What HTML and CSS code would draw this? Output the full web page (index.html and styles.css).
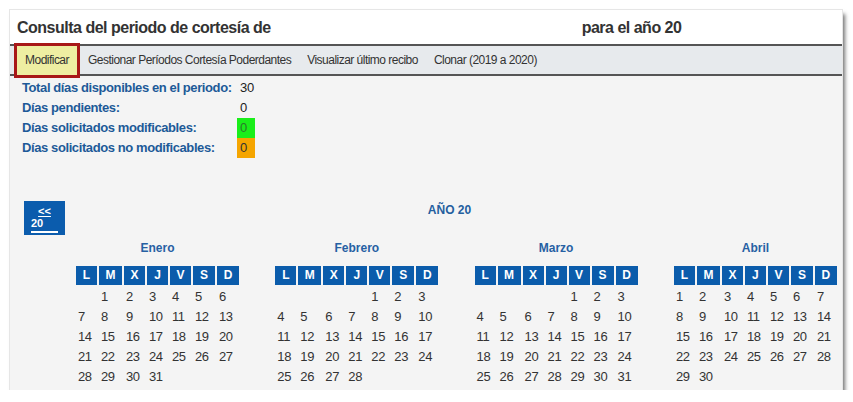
FILE: index.html
```html
<!DOCTYPE html>
<html lang="es">
<head>
<meta charset="utf-8">
<title>Consulta del periodo de cortesía</title>
<link rel="stylesheet" href="styles.css">
</head>
<body>
<div class="panel">
  <div class="header">
    <span class="title">Consulta del periodo de cortesía de</span>
    <span class="title title-right">para el año 20</span>
  </div>
  <div class="toolbar">
    <span class="tool active">Modificar</span>
    <span class="tool">Gestionar Períodos Cortesía Poderdantes</span>
    <span class="tool">Visualizar último recibo</span>
    <span class="tool">Clonar (2019 a 2020)</span>
  </div>
  <div class="stats">
    <span class="label">Total días disponibles en el periodo:</span><span class="value">30</span>
    <span class="label">Días pendientes:</span><span class="value">0</span>
    <span class="label">Días solicitados modificables:</span><span class="value green">0</span>
    <span class="label">Días solicitados no modificables:</span><span class="value orange">0</span>
  </div>
  <div class="nav">
    <div class="prev"><span class="prev-top">&lt;&lt;</span><span class="prev-year">20</span></div>
    <div class="year">AÑO 20</div>
  </div>
  <div class="months">
    <div class="month">
      <div class="month-name">Enero</div>
      <div class="week-head"><span>L</span><span>M</span><span>X</span><span>J</span><span>V</span><span>S</span><span>D</span></div>
      <div class="days">
        <span></span><span>1</span><span>2</span><span>3</span><span>4</span><span>5</span><span>6</span>
        <span>7</span><span>8</span><span>9</span><span>10</span><span>11</span><span>12</span><span>13</span>
        <span>14</span><span>15</span><span>16</span><span>17</span><span>18</span><span>19</span><span>20</span>
        <span>21</span><span>22</span><span>23</span><span>24</span><span>25</span><span>26</span><span>27</span>
        <span>28</span><span>29</span><span>30</span><span>31</span>
      </div>
    </div>
    <div class="month">
      <div class="month-name">Febrero</div>
      <div class="week-head"><span>L</span><span>M</span><span>X</span><span>J</span><span>V</span><span>S</span><span>D</span></div>
      <div class="days">
        <span></span><span></span><span></span><span></span><span>1</span><span>2</span><span>3</span>
        <span>4</span><span>5</span><span>6</span><span>7</span><span>8</span><span>9</span><span>10</span>
        <span>11</span><span>12</span><span>13</span><span>14</span><span>15</span><span>16</span><span>17</span>
        <span>18</span><span>19</span><span>20</span><span>21</span><span>22</span><span>23</span><span>24</span>
        <span>25</span><span>26</span><span>27</span><span>28</span>
      </div>
    </div>
    <div class="month">
      <div class="month-name">Marzo</div>
      <div class="week-head"><span>L</span><span>M</span><span>X</span><span>J</span><span>V</span><span>S</span><span>D</span></div>
      <div class="days">
        <span></span><span></span><span></span><span></span><span>1</span><span>2</span><span>3</span>
        <span>4</span><span>5</span><span>6</span><span>7</span><span>8</span><span>9</span><span>10</span>
        <span>11</span><span>12</span><span>13</span><span>14</span><span>15</span><span>16</span><span>17</span>
        <span>18</span><span>19</span><span>20</span><span>21</span><span>22</span><span>23</span><span>24</span>
        <span>25</span><span>26</span><span>27</span><span>28</span><span>29</span><span>30</span><span>31</span>
      </div>
    </div>
    <div class="month">
      <div class="month-name">Abril</div>
      <div class="week-head"><span>L</span><span>M</span><span>X</span><span>J</span><span>V</span><span>S</span><span>D</span></div>
      <div class="days">
        <span>1</span><span>2</span><span>3</span><span>4</span><span>5</span><span>6</span><span>7</span>
        <span>8</span><span>9</span><span>10</span><span>11</span><span>12</span><span>13</span><span>14</span>
        <span>15</span><span>16</span><span>17</span><span>18</span><span>19</span><span>20</span><span>21</span>
        <span>22</span><span>23</span><span>24</span><span>25</span><span>26</span><span>27</span><span>28</span>
        <span>29</span><span>30</span>
      </div>
    </div>
  </div>
</div>
</body>
</html>
```

FILE: styles.css
```css
html, body {
  margin: 0;
  padding: 0;
  background: #ffffff;
}

body {
  font-family: "Liberation Sans", Arial, sans-serif;
  color: #333333;
}

.panel {
  margin: 10px 0 0 10px;
  width: 832px;
  height: 380px;
  background: #f4f4f4;
  overflow: hidden;
  box-shadow: 0 0 0 1px #e6e6e6, 3px 4px 4px rgba(0, 0, 0, 0.55);
}

.header {
  height: 34px;
  background: #ffffff;
  display: flex;
  align-items: center;
  padding-left: 7px;
  box-sizing: border-box;
  padding-top: 2px;
}

.title {
  font-size: 16px;
  font-weight: bold;
  letter-spacing: -0.5px;
  color: #333333;
}

.title-right {
  margin-left: 311px;
}

.toolbar {
  height: 28px;
  background: #e7eaed;
  border-top: 2px solid #555555;
  border-bottom: 2px solid #555555;
  display: flex;
  align-items: center;
  padding-left: 4px;
}

.tool {
  padding: 0 8px;
  font-size: 12px;
  letter-spacing: -0.52px;
  color: #333333;
  line-height: 28px;
  white-space: nowrap;
}

.tool.active {
  height: 35px;
  box-sizing: border-box;
  border: 3px solid #a81818;
  background: #eeeea2;
  line-height: 29px;
}

.stats {
  display: grid;
  grid-template-columns: 215px auto;
  grid-auto-rows: 20px;
  padding: 2px 0 0 12px;
  justify-content: start;
}

.label {
  font-size: 13px;
  font-weight: bold;
  letter-spacing: -0.4px;
  color: #1d5a98;
  line-height: 20px;
}

.value {
  font-size: 13px;
  letter-spacing: -0.3px;
  color: #222222;
  line-height: 20px;
  width: 18px;
  padding-left: 3px;
  box-sizing: border-box;
  white-space: nowrap;
}

.value.green {
  background: #1aee1a;
  color: #2a7a2a;
}

.value.orange {
  background: #f5a500;
  color: #333333;
}

.nav {
  display: flex;
  margin-top: 43px;
  padding-left: 14px;
}

.prev {
  width: 41px;
  height: 34px;
  background: #0b5cad;
  display: flex;
  flex-direction: column;
  align-items: center;
  color: #ffffff;
  font-size: 11px;
  font-weight: bold;
  box-sizing: border-box;
  padding-top: 4px;
}

.prev-top {
  text-decoration: underline;
  line-height: 12px;
}

.prev-year {
  align-self: flex-start;
  margin-left: 7px;
  padding-right: 15px;
  line-height: 12px;
  padding-bottom: 2px;
  border-bottom: 2px solid #ffffff;
}

.year {
  flex: 1;
  text-align: center;
  padding-right: 8px;
  font-size: 12px;
  font-weight: bold;
  color: #245f9f;
  line-height: 16px;
  padding-top: 1px;
}

.months {
  display: flex;
  gap: 36.3px;
  padding-left: 66px;
  margin-top: 5px;
}

.month {
  width: 163px;
  flex: none;
}

.month-name {
  text-align: center;
  font-size: 12px;
  font-weight: bold;
  color: #2660a3;
  line-height: 16px;
}

.week-head,
.days {
  display: grid;
  grid-template-columns: 21px 23px 21px 21px 21px 22px 22px;
  column-gap: 2px;
}

.week-head {
  margin-top: 10px;
  margin-bottom: 2px;
}

.week-head span {
  background: #0b5cab;
  color: #ffffff;
  font-size: 12px;
  font-weight: bold;
  text-align: center;
  line-height: 19px;
}

.days {
  grid-auto-rows: 20px;
}

.days span {
  font-size: 13px;
  letter-spacing: -0.4px;
  color: #333333;
  line-height: 20px;
  padding-left: 2px;
  white-space: nowrap;
}
```
